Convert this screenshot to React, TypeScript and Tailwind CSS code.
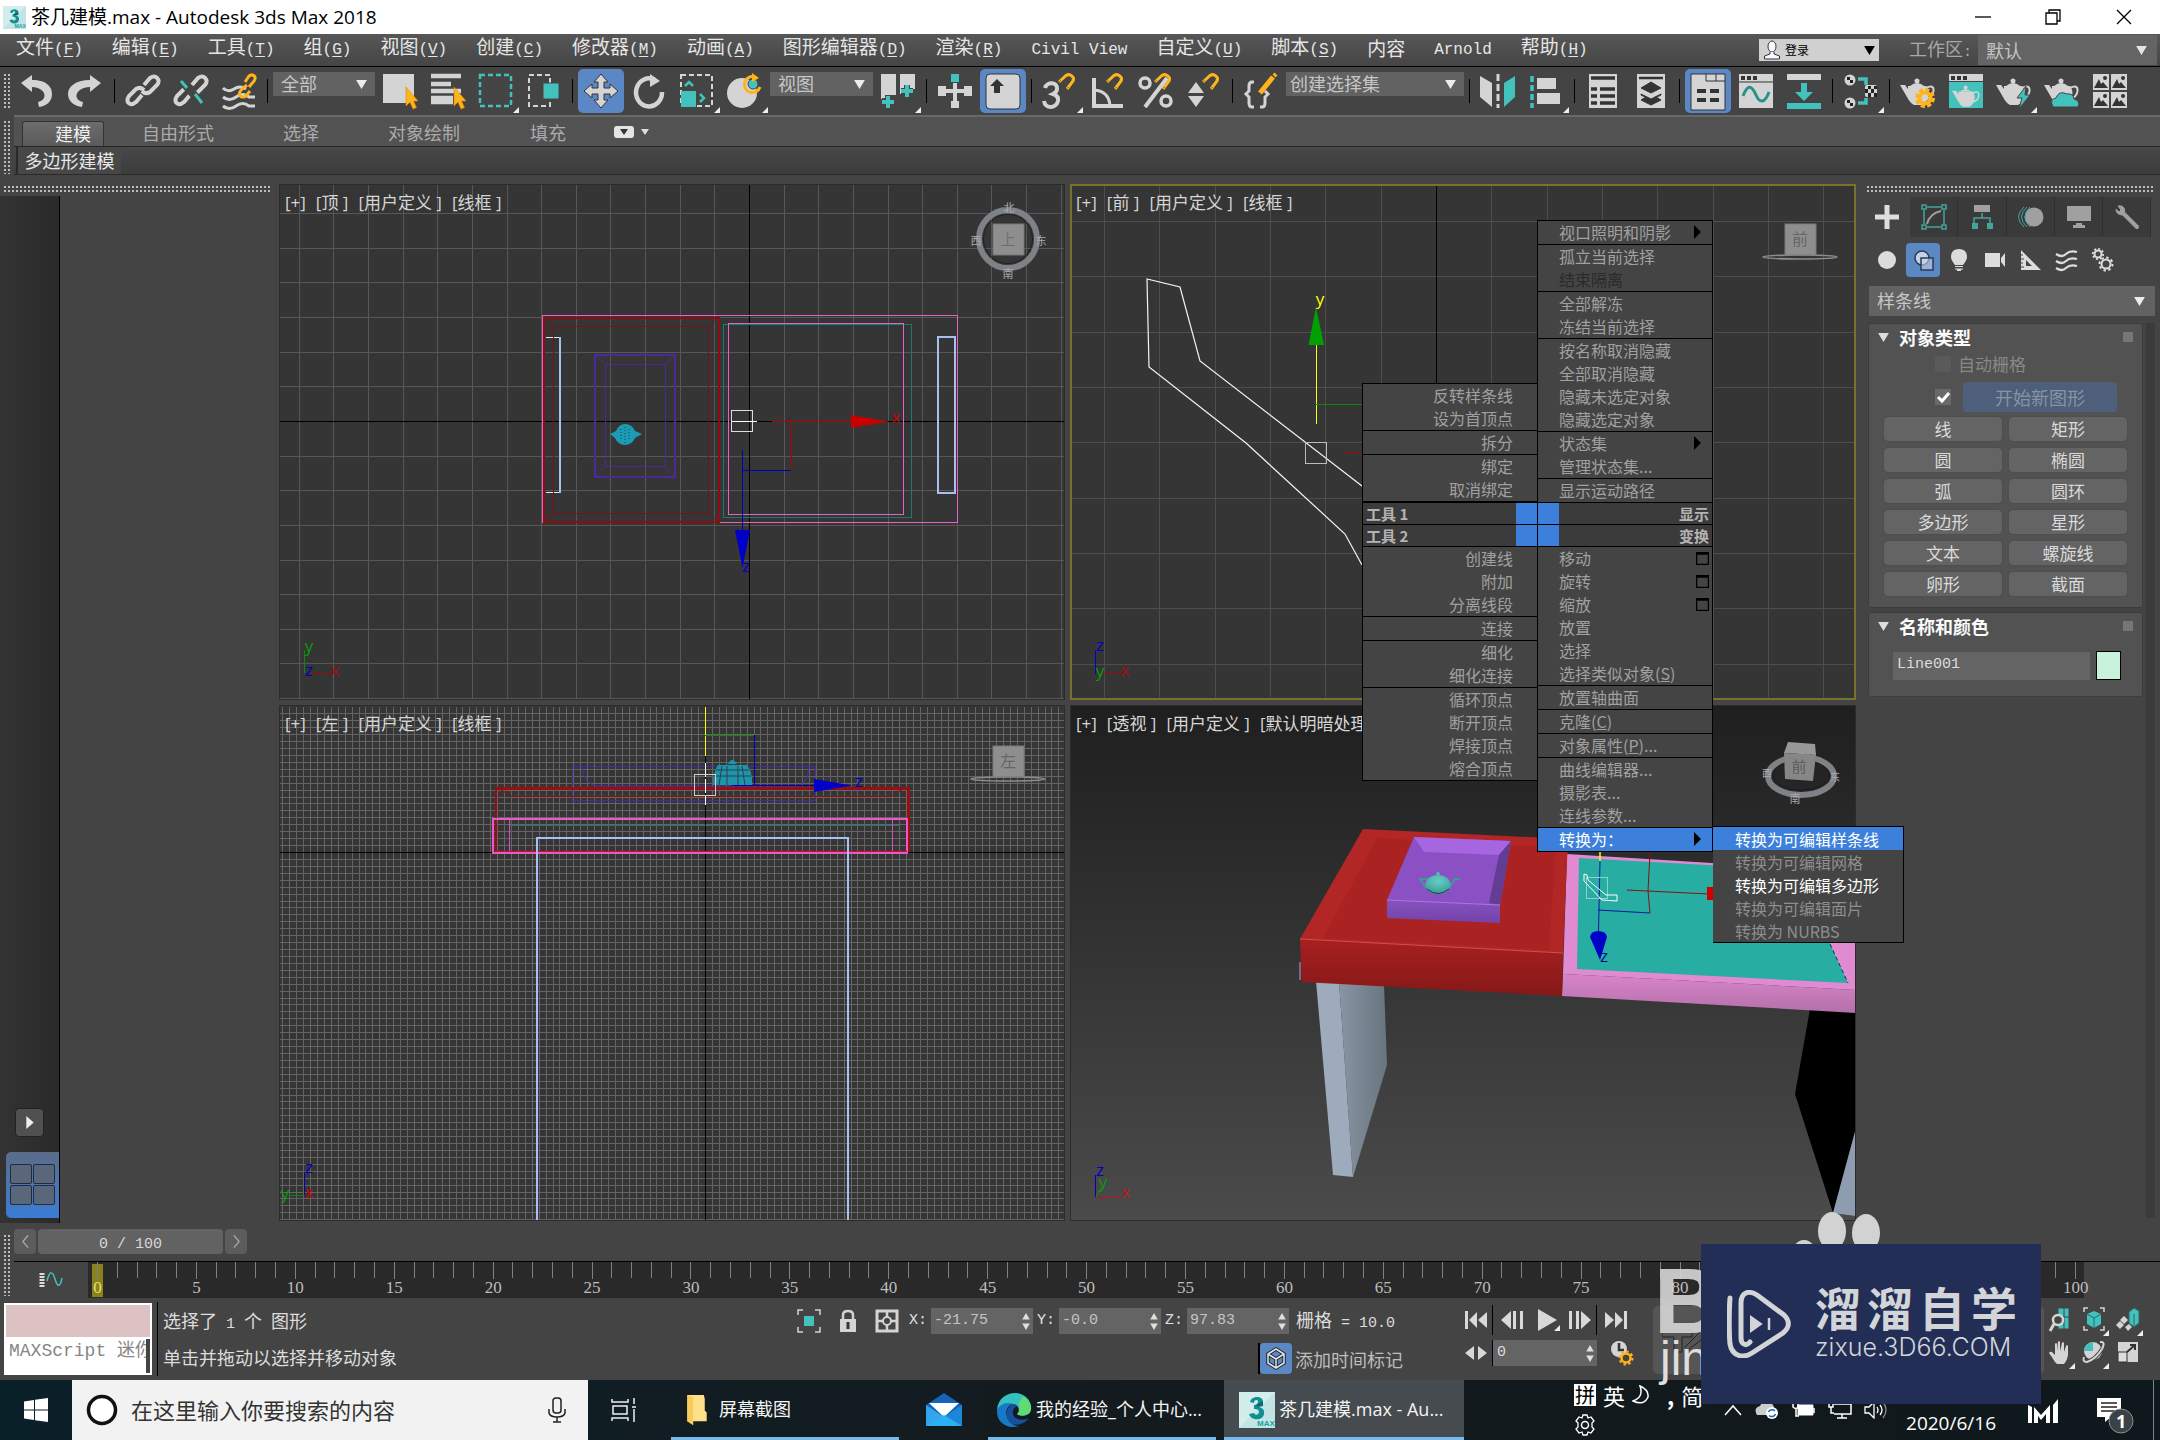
import React from "react";

const LIGHT = "#d4d4d4";
const TEAL = "#43c1bd";
const AMBER = "#ffb41c";

/* Sets half-width characters in the monospaced face beside full-width ones. */
function Mix({ children, big = false }: { children: string; big?: boolean }) {
  const parts = children.split(/([\x20-\x7e]+)/);
  return (
    <>
      {parts.map((p, i) =>
        i % 2 ? (
          <span key={i} className={`whitespace-pre font-['Liberation_Mono',monospace] ${big ? "text-[16px]" : "text-[15px]"}`}>
            {p}
          </span>
        ) : (
          <React.Fragment key={i}>{p}</React.Fragment>
        )
      )}
    </>
  );
}

function Caret({ className = "" }: { className?: string }) {
  return (
    <svg viewBox="0 0 12 10" className={`pointer-events-none h-[9px] w-[11px] ${className}`} aria-hidden="true">
      <path d="M0 0H12L6 10Z" fill="currentColor" />
    </svg>
  );
}

function Drop({ label, value, box, arrow = "right-2", text = "pl-2" }: { label: string; value: string; box: string; arrow?: string; text?: string }) {
  return (
    <div className={`relative flex shrink-0 items-center bg-[#626262] text-[#c6c6c6] ${box}`}>
      <select aria-label={label} className={`h-full w-full appearance-none bg-transparent pr-6 pb-[2px] text-[18px] leading-5 outline-none ${text}`}>
        <option>{value}</option>
      </select>
      <Caret className={`absolute text-[#ececec] ${arrow}`} />
    </div>
  );
}

/* ---------- title bar ---------- */

function MaxLogo({ className }: { className: string }) {
  return (
    <svg viewBox="0 0 36 36" className={className} aria-hidden="true">
      <rect width="36" height="36" fill="#d3ecec" />
      <path d="M0 36L36 0V36Z" fill="#c2e4e4" />
      <path d="M11 10C12 4 23 3 24 9C24 13 21 14 19 15C22 15 26 17 25 22C24 29 12 29 10 22L15 21C16 24 20 23 20 20C20 17 17 17 15 17V13C17 13 19 12 19 9.500C18 7 15 8 15 11Z" fill="#0f8f90" />
      <path d="M17 13L24 9V14L19 15Z" fill="#0a6a6e" />
      <text x="18" y="34" fontSize="8" fontWeight="700" fill="#14a5a5" fontFamily="Liberation Sans">MAX</text>
    </svg>
  );
}

function TitleBar() {
  return (
    <header className="flex h-[34px] shrink-0 items-center bg-white text-black">
      <MaxLogo className="ml-[3px] h-[23px] w-[23px]" />
      <h1 className="ml-[5px] font-['Open_Sans','Noto_Sans_CJK_SC',sans-serif] text-[19px] leading-[32px]">茶几建模.max - Autodesk 3ds Max 2018</h1>
      <div className="ml-auto flex h-full">
        <button aria-label="最小化" className="flex w-[70px] items-center justify-center">
          <svg viewBox="0 0 16 16" className="h-4 w-4"><path d="M0 8H16" stroke="#000" strokeWidth="1.300" /></svg>
        </button>
        <button aria-label="还原" className="flex w-[70px] items-center justify-center">
          <svg viewBox="0 0 16 16" className="h-4 w-4" fill="none" stroke="#000" strokeWidth="1.300"><path d="M1 4H12V15H1ZM4 4V1H15V12H12" /></svg>
        </button>
        <button aria-label="关闭" className="flex w-[72px] items-center justify-center">
          <svg viewBox="0 0 16 16" className="h-4 w-4"><path d="M1 1L15 15M15 1L1 15" stroke="#000" strokeWidth="1.300" /></svg>
        </button>
      </div>
    </header>
  );
}

/* ---------- menu bar ---------- */

const MENUS: [string, string?][] = [
  ["文件", "F"], ["编辑", "E"], ["工具", "T"], ["组", "G"], ["视图", "V"], ["创建", "C"], ["修改器", "M"], ["动画", "A"],
  ["图形编辑器", "D"], ["渲染", "R"], ["Civil View"], ["自定义", "U"], ["脚本", "S"], ["内容"], ["Arnold"], ["帮助", "H"],
];

function MenuBar() {
  return (
    <div className="flex h-[33px] shrink-0 items-center border-b border-black bg-linear-to-b from-[#575757] to-[#454545] pl-[16px]">
      <nav className="flex gap-[29px] pb-1">
        {MENUS.map(([t, k]) => (
          <button key={t} className="text-[19px] leading-[26px] whitespace-nowrap text-[#e6e6e6]">
            <Mix big>{t}</Mix>
            {k && (
              <span className="font-['Liberation_Mono',monospace] text-[16px]">
                (<u className="underline-offset-2">{k}</u>)
              </span>
            )}
          </button>
        ))}
      </nav>
      <div className="relative ml-auto flex h-[22px] w-[120px] items-center bg-[#d0d0d0] text-black">
        <svg viewBox="0 0 18 20" className="ml-1 h-[20px] w-[18px]" aria-hidden="true">
          <ellipse cx="9" cy="6.500" rx="4" ry="5.500" fill="#f4f8ff" stroke="#333" />
          <path d="M7 12V14L1.500 16V19H16.500V16L11 14V12" fill="#f4f8ff" stroke="#333" />
        </svg>
        <button className="ml-[4px] text-[12px] leading-[20px]">登录</button>
        <Caret className="absolute right-1 h-[7px] w-[10px] text-black" />
      </div>
      <label htmlFor="workspace" className="ml-[30px] text-[18px] text-[#a9a9a9]">
        <Mix>工作区:</Mix>
      </label>
      <div className="relative mr-[3px] ml-[6px] flex h-[30px] w-[179px] items-center bg-[#646464]">
        <select id="workspace" className="h-full w-full appearance-none bg-transparent pl-2 text-[18px] leading-5 text-[#c4c4c4]">
          <option>默认</option>
        </select>
        <Caret className="absolute right-[10px] text-[#e4e4e4]" />
      </div>
    </div>
  );
}

/* ---------- main toolbar ---------- */

const arrowCursor = <path d="M29 18V37L33 33L36 40L39.500 38.500L36.500 32H41Z" fill={AMBER} stroke="#d98b00" strokeWidth=".6" />;
const magnet = (
  <g fill="none" strokeWidth="3">
    <path d="M22 13L29 6.500C33 4 38 8 36 12L30 20" stroke={AMBER} />
    <path d="M22 13L24 11M31.500 18L30 20.500" stroke="#7a5a10" strokeWidth="1" strokeDasharray="1 1" />
  </g>
);
const link = "M24 16L30 9C36 5 41 11 37 16L30 23C27 25 24 24 22 22M22 26L16 33C10 38 5 33 9 27L16 20C19 18 22 19 24 21";
const teapot = (
  <g>
    <circle cx="22" cy="12" r="2.500" fill={LIGHT} />
    <path d="M15 17Q22 11 29 17Z" fill={LIGHT} />
    <path d="M13 17H31Q36 24 31 32Q29 36 26 36H19Q15 34 12 28L5 16H10L13 20Z" fill={LIGHT} />
    <path d="M31 19Q39 15 38.500 22Q38 28 31 30" fill="none" stroke={LIGHT} strokeWidth="2" />
  </g>
);
const picture = (x: number, y: number) => (
  <g key={`${x}-${y}`}>
    <rect x={x} y={y} width="16" height="16" fill={LIGHT} />
    <path d={`M${x + 1} ${y + 14}L${x + 6} ${y + 5}L${x + 8} ${y + 10}L${x + 10} ${y + 8}L${x + 15} ${y + 14}Z`} fill="#333" />
    <circle cx={x + 12} cy={y + 4} r="2" fill="#333" />
  </g>
);

type Tool = { id: string; active?: boolean; fly?: boolean; icon?: React.ReactNode };

const TOOLS: (Tool | "|" | "sel1" | "sel2" | "sel3")[] = [
  { id: "撤消", icon: <path d="M6 14L17 6V11C32 11 37 18 37 25C37 33 31 37 24 38L23 33C33 31 32 19 17 18V23Z" fill={LIGHT} /> },
  { id: "重做", icon: <path d="M38 14L27 6V11C12 11 5 18 5 25C5 33 12 37 19 38L20 33C10 31 11 19 27 18V23Z" fill={LIGHT} /> },
  "|",
  { id: "链接", icon: <path d={link} fill="none" stroke={LIGHT} strokeWidth="4" /> },
  { id: "取消链接", icon: (<g fill="none"><path d={link} stroke={LIGHT} strokeWidth="4" /><path d="M12 10L35 36" stroke="#444" strokeWidth="8" /><path d="M13 12L19 19M27 25L34 34" stroke={TEAL} strokeWidth="3" /></g>) },
  { id: "绑定到空间扭曲", icon: (<g fill="none"><path d="M7 19Q12 24 18 20T30 20M7 28Q13 33 20 28T33 28H39M7 37Q13 42 20 37T33 37H39" stroke={LIGHT} strokeWidth="3" /><path d="M29 13L33 7C37 4 41 8 38 12L33 18M31 16L26 20C20 26 26 30 30 27L34 22" stroke={AMBER} strokeWidth="3" /></g>) },
  "|",
  "sel1",
  { id: "选择对象", icon: (<g><rect x="6" y="5" width="31" height="29" fill={LIGHT} />{arrowCursor}</g>) },
  { id: "按名称选择", icon: (<g><path d="M6 7H36M6 15H26M6 22H36M6 29H28M6 33H28" stroke={LIGHT} strokeWidth="4.500" />{arrowCursor}</g>) },
  { id: "矩形选择区域", fly: true, icon: <rect x="7" y="6" width="31" height="31" fill="none" stroke={TEAL} strokeWidth="2.500" strokeDasharray="5 3" /> },
  { id: "窗口/交叉", icon: (<g><rect x="8" y="6" width="21" height="31" fill="none" stroke={LIGHT} strokeWidth="2" strokeDasharray="5 3" /><rect x="22" y="14" width="16" height="16" fill={TEAL} stroke="#444" /></g>) },
  "|",
  { id: "选择并移动", active: true, icon: <path d="M23 5L30 13H26V19H32V15L40 22L32 29V25H26V31H30L23 39L16 31H20V25H14V29L6 22L14 15V19H20V13H16Z" fill={LIGHT} stroke="#333" /> },
  { id: "选择并旋转", icon: (<g><path d="M29 11A13 14 0 1 0 36 23" fill="none" stroke={LIGHT} strokeWidth="4.500" /><path d="M24 5L34 12L24 18Z" fill={LIGHT} /></g>) },
  { id: "选择并缩放", fly: true, icon: (<g><rect x="7" y="6" width="31" height="31" fill="none" stroke={LIGHT} strokeWidth="2" strokeDasharray="5 3" /><rect x="7" y="22" width="15" height="16" fill={TEAL} /><path d="M11 17L15 13L19 17M26 25L30 29L26 33" fill="none" stroke={TEAL} strokeWidth="2.500" /></g>) },
  { id: "选择并放置", fly: true, icon: (<g><circle cx="20" cy="24" r="15" fill={LIGHT} /><circle cx="31" cy="15" r="5" fill={TEAL} stroke="#444" /><path d="M33 8A8 8 0 1 0 38 18" fill="none" stroke={AMBER} strokeWidth="3" /><path d="M30 4L37 9L30 13Z" fill={AMBER} /></g>) },
  "sel2",
  { id: "使用轴点中心", fly: true, icon: (<g><path d="M6 5H21V26H14V30H6Z" fill={LIGHT} /><path d="M25 5H40V20H35V25H25Z" fill={LIGHT} /><path d="M13 26V39M7 32H19M32 16V29M26 22H38" stroke="#444" strokeWidth="6" /><path d="M13 27V39M7 33H19M32 16V28M26 22H38" stroke={TEAL} strokeWidth="4" /></g>) },
  "|",
  { id: "选择并操纵", icon: (<g fill={LIGHT}><path d="M21 14H25V20H32V17H40V27H32V24H25V32H27V39H19V32H21V24H14V27H6V17H14V20H21Z" /><rect x="19" y="5" width="8" height="8" fill={TEAL} /></g>) },
  { id: "键盘快捷键覆盖切换", active: true, icon: (<g><rect x="6" y="5" width="34" height="35" rx="4" fill={LIGHT} stroke="#333" /><path d="M17 10L24 17H20V24H14V17H10Z" fill="#333" /></g>) },
  "|",
  { id: "捕捉开关", fly: true, icon: (<g>{magnet}<path d="M8 19C10 12 21 13 20 20Q20 23 16 25Q22 27 21 32C19 40 8 40 7 32" fill="none" stroke={LIGHT} strokeWidth="4" /></g>) },
  { id: "角度捕捉切换", icon: (<g fill="none">{magnet}<path d="M9 9V37H38" stroke={LIGHT} strokeWidth="4" /><path d="M9 21Q24 22 25 37" stroke={LIGHT} strokeWidth="3" /></g>) },
  { id: "百分比捕捉切换", icon: (<g fill="none">{magnet}<circle cx="12" cy="14" r="5" stroke={LIGHT} strokeWidth="3.500" /><circle cx="33" cy="32" r="5" stroke={LIGHT} strokeWidth="3.500" /><path d="M34 9L12 38" stroke={LIGHT} strokeWidth="4" /></g>) },
  { id: "微调器捕捉切换", icon: (<g>{magnet}<path d="M15 13L23 24H7ZM15 38L7 27H23Z" fill={LIGHT} /></g>) },
  "|",
  { id: "编辑命名选择集", icon: (<g fill="none"><path d="M16 13H14Q11 13 11 17V22L8 25L11 28V34Q11 38 14 38H16M22 38H24Q27 38 27 34V28L30 25L27 22" stroke={LIGHT} strokeWidth="3" /><path d="M22 24L35 8" stroke={AMBER} strokeWidth="5" /><path d="M36 7L38 5" stroke={AMBER} strokeWidth="4" /></g>) },
  "sel3",
  "|",
  { id: "镜像", icon: (<g><path d="M5 7L17 14V38L5 28Z" fill={LIGHT} /><path d="M40 7L29 14V38L40 28Z" fill={TEAL} /><path d="M23 5V39" stroke={LIGHT} strokeWidth="3" strokeDasharray="7 3" /></g>) },
  { id: "对齐", fly: true, icon: (<g><path d="M9 7V39" stroke={TEAL} strokeWidth="3.500" strokeDasharray="6 3" /><path d="M14 9H33V20H14ZM14 24H37V35H14Z" fill={LIGHT} /></g>) },
  "|",
  { id: "切换场景资源管理器", icon: (<g><rect x="9" y="5" width="28" height="34" fill={LIGHT} /><path d="M11 9H35M11 20H17M20 20H35M11 27H17M20 27H35M11 34H17M20 34H35" stroke="#333" strokeWidth="3.500" /></g>) },
  { id: "切换层资源管理器", icon: (<g><rect x="9" y="5" width="28" height="34" fill={LIGHT} /><path d="M11 9H35" stroke="#333" strokeWidth="2.500" /><path d="M23 13L33 19L23 24L13 19ZM13 25L23 30L33 25V26L23 31L13 26ZM13 31L23 36L33 31L28 28L23 31L18 28Z" fill="#333" stroke="#333" /></g>) },
  "|",
  { id: "显示功能区", active: true, icon: (<g><path d="M6 5H40V41H6Z" fill={LIGHT} stroke="#333" /><path d="M21 5V12H40M31 5V12" fill="none" stroke="#333" /><path d="M12 22H21M25 22H34M12 31H21M25 31H34" stroke="#333" strokeWidth="4" /></g>) },
  { id: "曲线编辑器", icon: (<g><rect x="6" y="5" width="34" height="34" fill={LIGHT} /><path d="M8 9H12M14 9H18M20 9H24" stroke="#333" strokeWidth="4" /><path d="M6 13H40" stroke="#333" /><path d="M10 27C15 14 19 17 23 26S32 34 36 23" fill="none" stroke="#2b8f8c" strokeWidth="3" /></g>) },
  { id: "图解视图", icon: (<g><rect x="6" y="5" width="34" height="6" fill={LIGHT} /><rect x="6" y="34" width="34" height="6" fill={TEAL} /><path d="M20 14H26V23H32L23 32L14 23H20Z" fill={TEAL} /></g>) },
  "|",
  { id: "材质编辑器", fly: true, icon: (<g><path d="M20 10H28V16M20 34H28V29" fill="none" stroke={TEAL} strokeWidth="3.500" /><circle cx="12" cy="11" r="5.500" fill={LIGHT} /><circle cx="12" cy="34" r="5.500" fill={LIGHT} /><rect x="27" y="16" width="12" height="12" rx="2" fill={LIGHT} /><path d="M9 8H12V11H15V14H12V11H9ZM9 31H12V34H15V37H12V34H9ZM30 17H33V20H30ZM36 17H39V20H36ZM27 20H30V24H27ZM33 20H36V24H33ZM30 24H33V28H30ZM36 24H39V28H36Z" fill="#222" /></g>) },
  "|",
  { id: "渲染设置", icon: (<g>{teapot}<circle cx="30" cy="29" r="8" fill="none" stroke={AMBER} strokeWidth="4" strokeDasharray="4 2.280" /><circle cx="30" cy="29" r="5.500" fill="none" stroke={AMBER} strokeWidth="4" /><circle cx="30" cy="29" r="3.200" fill={LIGHT} /></g>) },
  { id: "渲染帧窗口", icon: (<g><rect x="6" y="5" width="34" height="7" fill={LIGHT} /><path d="M8 9H12M14 9H18M20 9H24" stroke="#333" strokeWidth="4" /><rect x="6" y="13" width="34" height="26" fill={TEAL} /><g transform="translate(5 9) scale(.8)">{teapot}</g></g>) },
  { id: "渲染产品", fly: true, icon: (<g>{teapot}<path d="M35 17L26 29H31L28 40L39 26H34Z" fill={TEAL} stroke="#444" /></g>) },
  { id: "在云中渲染", icon: (<g>{teapot}<path d="M14 38Q10 30 17 29Q20 21 28 25Q34 24 35 30Q42 32 39 38Z" fill={TEAL} stroke="#444" /></g>) },
  { id: "打开库", icon: <g>{[picture(6, 5), picture(24, 5), picture(6, 23), picture(24, 23)]}</g> },
];

const GRIP = "bg-[radial-gradient(#bdbdbd_1px,transparent_1px)] bg-[length:4px_4px]";

function Toolbar() {
  return (
    <div className="flex h-[48px] shrink-0 items-start gap-[2px] overflow-hidden bg-[#444] pt-[2px]">
      <div className={`mt-[4px] mr-[2px] ml-[3px] h-[37px] w-[8px] shrink-0 ${GRIP}`} />
      {TOOLS.map((t, i) => {
        if (t === "|") return <div key={i} className="mt-[10px] mr-[3px] ml-[3px] h-[24px] w-px shrink-0 bg-black" />;
        if (t === "sel1") return <Drop key={i} label="选择过滤器" value="全部" box="mt-[3px] h-[24px] w-[102px]" />;
        if (t === "sel2") return <Drop key={i} label="参考坐标系" value="视图" box="mt-[3px] h-[24px] w-[103px]" />;
        if (t === "sel3") return <Drop key={i} label="命名选择集" value="创建选择集" box="mt-[3px] h-[24px] w-[178px]" text="pl-1" />;
        return (
          <button key={t.id} aria-label={t.id} className={`h-[44px] w-[46px] shrink-0 rounded-[5px] ${t.active ? "bg-[#5b87c4]" : ""}`}>
            <svg viewBox="0 0 46 44" className="h-[44px] w-[46px]" aria-hidden="true">
              {t.icon}
              {t.fly && <path d="M46 38V44H40Z" fill="#eee" />}
            </svg>
          </button>
        );
      })}
    </div>
  );
}

/* ---------- ribbon ---------- */

function Ribbon() {
  return (
    <div className="flex h-[60px] shrink-0 bg-[#444]">
      <div className={`mt-[5px] ml-[3px] h-[54px] w-[8px] shrink-0 ${GRIP}`} />
      <div className="ml-[3px] flex min-w-0 flex-1 flex-col">
        <div className="flex h-[32px] items-end border-t-2 border-b border-t-[#686868] border-b-[#262626] bg-[#525252] text-[18px] leading-[28px] text-[#ababab]">
          <button className="ml-[8px] h-[25px] w-[82px] rounded-t-[3px] border border-b-0 border-[#333] bg-linear-to-b from-[#6c6c6c] to-[#5a5a5a] pb-[3px] pl-[32px] text-left leading-[20px] text-[#eee]">建模</button>
          <button className="ml-[38px]">自由形式</button>
          <button className="ml-[69px]">选择</button>
          <button className="ml-[69px]">对象绘制</button>
          <button className="ml-[70px]">填充</button>
          <button aria-label="功能区显示" className="mb-[8px] ml-[48px] flex items-center gap-[7px]">
            <span className="flex h-[12px] w-[20px] items-center justify-center rounded-[3px] bg-[#e4e4e4]">
              <svg viewBox="0 0 8 6" className="h-[6px] w-[8px]"><path d="M0 0H8L4 6Z" fill="#333" /></svg>
            </span>
            <svg viewBox="0 0 8 6" className="h-[6px] w-[8px]"><path d="M0 0H8L4 6Z" fill="#ddd" /></svg>
          </button>
        </div>
        <div className="flex h-[28px] items-center border-b border-[#2a2a2a] bg-linear-to-b from-[#484848] to-[#3c3c3c] pl-[2px]">
          <button className="h-full w-[105px] border-l-2 border-[#2a2a2a] bg-[#474747] pb-[2px] text-[18px] leading-[24px] text-[#e8e8e8]">多边形建模</button>
        </div>
      </div>
    </div>
  );
}

/* ---------- viewports ---------- */

function lines(from: number, to: number, origin: number, step: number) {
  const out: number[] = [];
  const first = origin - Math.floor((origin - from) / step) * step;
  for (let v = first; v < to; v += step) out.push(Math.round(v) + 0.5);
  return out;
}

function Grid({ x, y, ox, oy, step, color }: { x: number; y: number; ox: number; oy: number; step: number; color: string }) {
  return (
    <g stroke={color} strokeWidth="1" shapeRendering="crispEdges">
      {lines(x, x + 786, ox, step).map((v) => <path key={`v${v}`} d={`M${v} ${y}V${y + 516}`} />)}
      {lines(y, y + 516, oy, step).map((v) => <path key={`h${v}`} d={`M${x} ${v}H${x + 786}`} />)}
    </g>
  );
}

function Letter({ x, y, c, children, size = 17 }: { x: number; y: number; c: string; children: string; size?: number }) {
  return (
    <text x={x} y={y} fill={c} fontSize={size} textAnchor="middle" dominantBaseline="central" fontFamily="'Open Sans','Noto Sans CJK SC',sans-serif">
      {children}
    </text>
  );
}

function FlatCube({ x, y, face }: { x: number; y: number; face: string }) {
  return (
    <g>
      <ellipse cx={x} cy={y + 18} rx="37" ry="2" fill="none" stroke="#8b8d90" strokeWidth="1.500" />
      <rect x={x - 15} y={y - 15} width="31" height="31" fill="#8e8e8e" stroke="#7b7b7b" />
      <Letter x={x} y={y} c="#666" size={16}>{face}</Letter>
    </g>
  );
}

function View({ label, box, active = false, className, children }: { label: string[]; box: string; active?: boolean; className: string; children: React.ReactNode }) {
  return (
    <section aria-label={label.join(" ")} className={`relative min-h-0 min-w-0 overflow-hidden ${className}`}>
      <svg viewBox={box} preserveAspectRatio="xMidYMid slice" className="block h-full w-full" aria-hidden="true">{children}</svg>
      <div className={`absolute inset-0 flex items-start gap-[10px] text-[17px] leading-[24px] whitespace-nowrap text-[#d6d6d6] ${active ? "border-2 border-[#7a712c] pt-[5px] pl-[4px]" : "border border-[#2c2c2c] pt-[6px] pl-[5px]"}`}>
        {label.map((l) => <button key={l} className="font-['Open_Sans','Noto_Sans_CJK_SC',sans-serif]">{l}</button>)}
      </div>
    </section>
  );
}

function TopView() {
  return (
    <View label={["[+]", "[顶 ]", "[用户定义 ]", "[线框 ]"]} box="279 184 786 516" className="bg-[#353535]">
      <Grid x={279} y={184} ox={749} oy={421} step={34.64} color="#575757" />
      <path d="M749.500 184V700M279 421.500H1065" stroke="#000" shapeRendering="crispEdges" />
      <g fill="none" shapeRendering="crispEdges">
        <path d="M542.500 315.500H957.500V522.500H542.500Z" stroke="#e662c6" strokeWidth="1.500" />
        <path d="M723.500 324.500H911.500V517.500H723.500Z" stroke="#1a7a6e" />
        <path d="M728.500 323.500H903.500V514.500H728.500Z" stroke="#e662c6" />
        <path d="M545.500 337.500H560M545.500 492.500H560" stroke="#dfe8f8" />
        <path d="M560 337V493" stroke="#a9c0ee" strokeWidth="2" />
        <path d="M938 337H955V493H938Z" stroke="#a9c0ee" strokeWidth="2" />
        <path d="M544 317.500H719V522H544Z" stroke="#900c14" strokeWidth="2" />
        <path d="M553.500 326.500H708.500V513.500H553.500Z" stroke="#7c1014" />
        <path d="M595 355H675V477H595Z" stroke="#4a2a98" strokeWidth="2" />
        <path d="M605.500 364.500H665.500V466.500H605.500Z" stroke="#4a2a98" />
      </g>
      <g stroke="#7c1014"><path d="M544 317L553 326M719 317L709 326M544 522L553 513M719 522L709 513" /></g>
      <g stroke="#4a2a98"><path d="M595 355L605 364M675 355L665 364M595 477L605 466M675 477L665 466" /></g>
      <path d="M610 434L616 431Q619 424 625 424Q632 424 635 431L642 434L635 438Q632 445 625 445Q618 445 615 438Z" fill="#1c9cb4" />
      <g stroke="#173a5c" strokeDasharray="1 2" fill="none"><path d="M621 429V441M625 427V443M629 429V441" /></g>
      <g shapeRendering="crispEdges" fill="none">
        <rect x="731.500" y="410.500" width="21" height="21" stroke="#ddd" />
        <path d="M732 421.500H757" stroke="#fff" />
        <path d="M772 421.500H852M791.500 421V470" stroke="#b30000" />
        <path d="M742.500 450V530M742 470.500H791" stroke="#0000b8" />
      </g>
      <path d="M851 415V428L889 421.500Z" fill="#c80000" />
      <path d="M735 530H750L742.500 568Z" fill="#0000c8" />
      <Letter x={896} y={416} c="#d00000">x</Letter>
      <Letter x={746} y={565} c="#0000c8">z</Letter>
      <path d="M304.500 673V650" stroke="#0a8a0a" /><path d="M311 673.500H330" stroke="#a00a0a" />
      <Letter x={309} y={645} c="#0a9a0a">y</Letter>
      <Letter x={309} y={669} c="#0000b8">z</Letter>
      <Letter x={335} y={669} c="#b00a0a">x</Letter>
      <circle cx="1008" cy="239" r="29" fill="none" stroke="#7e8286" strokeWidth="6" />
      <circle cx="1008" cy="239" r="24.500" fill="none" stroke="#222" strokeWidth="1" />
      <rect x="993" y="224" width="31" height="31" fill="#8e8e8e" stroke="#777" />
      <Letter x={1008} y={239} c="#6e6e6e" size={15}>上</Letter>
      <Letter x={1009} y={207} c="#ababab" size={11}>北</Letter>
      <Letter x={1008} y={273} c="#ababab" size={11}>南</Letter>
      <Letter x={976} y={240} c="#ababab" size={11}>西</Letter>
      <Letter x={1041} y={240} c="#ababab" size={11}>东</Letter>
    </View>
  );
}

function FrontView() {
  return (
    <View active label={["[+]", "[前 ]", "[用户定义 ]", "[线框 ]"]} box="1070 184 786 516" className="bg-[#353535]">
      <Grid x={1070} y={184} ox={1436} oy={221} step={55.35} color="#4d4d4d" />
      <path d="M1436.500 184V700" stroke="#000" shapeRendering="crispEdges" />
      <path d="M1362 486L1200 361L1180 287L1147 279L1149 367L1246 443L1345 534L1362 565" fill="none" stroke="#f4f4f4" strokeWidth="1.200" />
      <g shapeRendering="crispEdges" fill="none">
        <path d="M1316.500 345V424" stroke="#ffff00" />
        <path d="M1316 404.500H1362" stroke="#0a8a0a" />
        <path d="M1345 452.500H1362" stroke="#b30000" />
        <rect x="1305.500" y="442.500" width="21" height="21" stroke="#bbb" />
      </g>
      <path d="M1316 307L1324 345H1308.500Z" fill="#00a000" />
      <Letter x={1320} y={298} c="#ffff00">y</Letter>
      <path d="M1095.500 674V650" stroke="#0000c8" /><path d="M1103 673.500H1121" stroke="#a00a0a" />
      <Letter x={1100} y={644} c="#0000c8">z</Letter>
      <Letter x={1100} y={670} c="#0a9a0a">y</Letter>
      <Letter x={1125} y={669} c="#b00a0a">x</Letter>
      <FlatCube x={1800} y={239} face="前" />
    </View>
  );
}

function LeftView() {
  return (
    <View label={["[+]", "[左 ]", "[用户定义 ]", "[线框 ]"]} box="279 705 786 516" className="bg-[#353535]">
      <Grid x={279} y={707} ox={705} oy={852} step={6.93} color="#646464" />
      <path d="M705.500 707V1221M279 852.500H1065" stroke="#000" shapeRendering="crispEdges" />
      <g fill="none" shapeRendering="crispEdges">
        <path d="M572.500 766.500H815.500V800.500H572.500Z" stroke="#4a2ab4" strokeDasharray="10 1" />
        <path d="M495.500 788H908V852" stroke="#9c0c10" strokeWidth="3" />
        <path d="M496 787V852" stroke="#9c0c10" strokeWidth="2" />
        <path d="M509 825.500H899" stroke="#1a7a6e" />
        <path d="M509.500 819V852M892.500 819V852" stroke="#d64fc0" />
        <path d="M493 852.500V819H907V852.500Z" stroke="#ee55c8" strokeWidth="2" />
        <path d="M495 851.500H907" stroke="#c41230" />
        <path d="M537 1221V838H848V1221" stroke="#a9c0f4" strokeWidth="2" />
      </g>
      <path d="M498 788L512 796.500H890L905 788" fill="none" stroke="#8c1014" />
      <path d="M582 767Q583 784 598 786H800Q808 780 809 767" fill="none" stroke="#4a2ab4" />
      <path d="M718 765H747Q753 773 752 785H713Q713 772 718 765ZM728 764Q732 756 737 764Z" fill="#1c94ac" />
      <path d="M714 776H751M716 770H749M722 766L719 785M742 766L745 785M727 766V785M738 766V785" stroke="#28424e" />
      <g shapeRendering="crispEdges" fill="none">
        <path d="M705.500 707V756" stroke="#ffff00" />
        <path d="M705 735.500H755" stroke="#0a8a0a" />
        <path d="M754.500 735V785M732 785.500H815" stroke="#0000b8" />
        <path d="M705.500 763V805" stroke="#fff" strokeDasharray="14 2" />
        <rect x="694.500" y="774.500" width="21" height="21" stroke="#ccc" />
      </g>
      <path d="M814 779V792L852 785.500Z" fill="#0000c8" />
      <Letter x={859} y={780} c="#0000c8">z</Letter>
      <path d="M304.500 1195V1172" stroke="#0000b8" /><path d="M289 1195.500H304" stroke="#0a8a0a" />
      <Letter x={309} y={1166} c="#0000c8">z</Letter>
      <Letter x={309} y={1191} c="#c80000">x</Letter>
      <Letter x={285} y={1192} c="#0a9a0a">y</Letter>
      <FlatCube x={1008} y={761} face="左" />
    </View>
  );
}

function PerspectiveView() {
  return (
    <View label={["[+]", "[透视 ]", "[用户定义 ]", "[默认明暗处理 ]"]} box="1070 705 786 516" className="bg-linear-to-b from-[#1f1f1f] to-[#4b4b4b]">
      <defs>
        <linearGradient id="redFront" x1="0" y1="0" x2="0" y2="1"><stop offset="0" stopColor="#a82020" /><stop offset="1" stopColor="#861818" /></linearGradient>
        <linearGradient id="pinkFront" x1="0" y1="0" x2="0" y2="1"><stop offset="0" stopColor="#d885cb" /><stop offset="1" stopColor="#b470a8" /></linearGradient>
        <linearGradient id="legSide" x1="0" y1="0" x2="1" y2="0"><stop offset="0" stopColor="#8995a3" /><stop offset="1" stopColor="#68747f" /></linearGradient>
        <linearGradient id="boxFront" x1="0" y1="0" x2="0" y2="1"><stop offset="0" stopColor="#8850c0" /><stop offset="1" stopColor="#7344a8" /></linearGradient>
        <radialGradient id="potBody" cx=".5" cy=".3" r=".7"><stop offset="0" stopColor="#66cfc6" /><stop offset="1" stopColor="#3a9d98" /></radialGradient>
      </defs>
      <path d="M1316 981L1339 982L1353 1177L1333 1175Z" fill="#9dabbd" />
      <path d="M1339 982L1384 985L1387 1065L1353 1177Z" fill="url(#legSide)" />
      <path d="M1810 1009L1856 1010V1128L1833 1213L1795 1094Z" fill="#000" />
      <path d="M1856 1128L1833 1213L1856 1216Z" fill="#8e9cb0" />
      <path d="M1567 854L1856 872V990L1563 974Z" fill="#e08ad2" />
      <path d="M1563 974L1856 990V1013L1562 996Z" fill="url(#pinkFront)" />
      <path d="M1579 858L1800 870L1830 944L1848 983L1577 969Z" fill="#27ada2" />
      <path d="M1830 944L1848 983" stroke="#0b3b36" strokeDasharray="4 3" />
      <path d="M1363 829L1568 839L1563 953L1300 939Z" fill="#b32626" />
      <path d="M1377 838L1556 847L1549 950L1323 938Z" fill="#ab2222" />
      <path d="M1300 939L1563 953L1562 996L1302 982Z" fill="url(#redFront)" />
      <path d="M1300 939L1563 953" stroke="#d05050" />
      <path d="M1300 962V980" stroke="#d88fd0" />
      <path d="M1414 837L1511 841L1500 905L1387 900Z" fill="#8a50c4" />
      <path d="M1414 837L1511 841L1499 855L1424 852Z" fill="#a566e0" />
      <path d="M1511 841L1500 905L1489 903L1499 855Z" fill="#633c94" />
      <path d="M1387 900L1500 905V923L1387 918Z" fill="url(#boxFront)" />
      <path d="M1387 900L1500 905" stroke="#a87ae0" />
      <path d="M1426 888L1420 879L1428 879M1449 888L1455 879H1460" fill="none" stroke="#3d9a94" strokeWidth="2" />
      <path d="M1425 885Q1427 875 1438 875Q1449 875 1451 885Q1449 894 1438 894Q1427 894 1425 885Z" fill="url(#potBody)" />
      <path d="M1427 889Q1438 898 1449 889" fill="none" stroke="#1c3f3e" />
      <circle cx="1438" cy="874" r="2" fill="#4fbcb4" />
      <path d="M1600 852V861" stroke="#ff0" strokeWidth="1.500" />
      <path d="M1600 861L1598.500 932M1598 910L1650 913" stroke="#0a1aa0" fill="none" />
      <path d="M1650 852L1648 891L1650 913M1627 890L1709 894" stroke="#8a1010" fill="none" />
      <rect x="1707" y="887" width="8" height="13" fill="#d00000" />
      <path d="M1590 937Q1591 931 1598 931Q1606 931 1607 937L1600 960Z" fill="#0000c8" />
      <Letter x={1604} y={955} c="#001090">z</Letter>
      <rect x="1586.500" y="877.500" width="21" height="21" fill="none" stroke="#8fd0c8" />
      <path d="M1584 874L1587 875L1588 880L1606 895L1617 895V901L1602 900L1584 881Z" fill="none" stroke="#fff" />
      <path d="M1095.500 1197V1175" stroke="#0000b8" /><path d="M1097 1196.500H1120" stroke="#c01010" /><path d="M1096 1196L1101 1188" stroke="#0a9a0a" />
      <Letter x={1100} y={1169} c="#0000c8">z</Letter>
      <Letter x={1103} y={1181} c="#0a9a0a">y</Letter>
      <Letter x={1126} y={1191} c="#c01818">x</Letter>
      <ellipse cx="1801" cy="776" rx="33" ry="19" fill="none" stroke="#7e8286" strokeWidth="6" />
      <ellipse cx="1801" cy="775" rx="28" ry="15" fill="none" stroke="#1c1c1c" />
      <path d="M1788 742L1815 744L1816 755L1784 753Z" fill="#989898" />
      <path d="M1784 753L1816 755L1813 781L1785 779Z" fill="#868686" />
      <Letter x={1799} y={766} c="#5c5c5c" size={15}>前</Letter>
      <Letter x={1767} y={773} c="#aaa" size={10}>西</Letter>
      <Letter x={1835} y={777} c="#aaa" size={10}>东</Letter>
      <Letter x={1795} y={798} c="#aaa" size={11}>南</Letter>
    </View>
  );
}

/* ---------- quad menu ---------- */

type Item = { t: string; key?: string; tail?: string; off?: boolean; sub?: boolean; box?: boolean; on?: boolean };

const UPPER_LEFT: Item[][] = [[{ t: "反转样条线" }, { t: "设为首顶点" }], [{ t: "拆分" }], [{ t: "绑定" }, { t: "取消绑定" }]];
const LOWER_LEFT: Item[][] = [
  [{ t: "创建线" }, { t: "附加" }, { t: "分离线段" }], [{ t: "连接" }], [{ t: "细化" }, { t: "细化连接" }],
  [{ t: "循环顶点" }, { t: "断开顶点" }, { t: "焊接顶点" }, { t: "熔合顶点" }],
];
const UPPER_RIGHT: Item[][] = [
  [{ t: "视口照明和阴影", sub: true }], [{ t: "孤立当前选择" }, { t: "结束隔离", off: true }], [{ t: "全部解冻" }, { t: "冻结当前选择" }],
  [{ t: "按名称取消隐藏" }, { t: "全部取消隐藏" }, { t: "隐藏未选定对象" }, { t: "隐藏选定对象" }],
  [{ t: "状态集", sub: true }, { t: "管理状态集..." }], [{ t: "显示运动路径" }],
];
const LOWER_RIGHT: Item[][] = [
  [{ t: "移动", box: true }, { t: "旋转", box: true }, { t: "缩放", box: true }, { t: "放置" }, { t: "选择" }, { t: "选择类似对象", key: "S" }],
  [{ t: "放置轴曲面" }], [{ t: "克隆", key: "C" }], [{ t: "对象属性", key: "P", tail: "..." }],
  [{ t: "曲线编辑器..." }, { t: "摄影表..." }, { t: "连线参数..." }], [{ t: "转换为：", sub: true, on: true }],
];

function Groups({ groups, right = false }: { groups: Item[][]; right?: boolean }) {
  return (
    <>
      {groups.map((g, i) => (
        <div key={i} className="border-b border-black">
          {g.map((it) => (
            <button
              key={it.t}
              className={`flex h-[23px] w-full items-center pb-px text-[16px] leading-[22px] whitespace-nowrap ${right ? "justify-end pr-[24px]" : "pr-[3px] pl-[21px]"} ${it.on ? "bg-[#3c80dc] text-white" : it.off ? "text-[#2a2a2a]" : "text-[#a0a0a0]"}`}
            >
              <span>{it.t}{it.key && <>(<u>{it.key}</u>)</>}{it.tail}</span>
              {it.sub && <svg viewBox="0 0 7 14" className="mr-[8px] ml-auto h-[14px] w-[7px]" aria-hidden="true"><path d="M0 0L7 7L0 14Z" fill="#000" /></svg>}
              {it.box && <svg viewBox="0 0 13 13" className="ml-auto h-[13px] w-[13px]" aria-hidden="true"><path d="M.5 .5H12.500V12.500H.5ZM0 2H13" fill="none" stroke="#000" strokeWidth="1.500" /></svg>}
            </button>
          ))}
        </div>
      ))}
    </>
  );
}

function QuadMenu() {
  const head = "flex h-[22px] items-center justify-between border-b border-black bg-[#3b3b3b] text-[15px] leading-[20px] font-bold text-[#b4b4b4]";
  return (
    <div role="menu" className="absolute top-[36px] left-[1083px] z-20 flex items-start font-['Noto_Sans_CJK_SC',sans-serif]">
      <div className="mt-[163px] w-[175px] border-t border-l border-black bg-[#444]">
        <div className="border-b border-black"><Groups groups={UPPER_LEFT} right /></div>
        <div className={`${head} pl-[3px]`}>工具 1<span className="h-full w-[21px] bg-[#3c80dc]" /></div>
        <div className={`${head} pl-[3px]`}>工具 2<span className="h-full w-[21px] bg-[#3c80dc]" /></div>
        <Groups groups={LOWER_LEFT} right />
      </div>
      <div className="w-[176px] border-t border-r border-l border-black bg-[#444]">
        <Groups groups={UPPER_RIGHT} />
        <div className={`${head} pr-[3px]`}><span className="h-full w-[21px] bg-[#3c80dc]" />显示</div>
        <div className={`${head} pr-[3px]`}><span className="h-full w-[21px] bg-[#3c80dc]" />变换</div>
        <Groups groups={LOWER_RIGHT} />
      </div>
      <div className="mt-[606px] w-[191px] border border-l-0 border-black bg-[#444] text-[16px] leading-[22px] text-[#8e8e8e]">
        <button className="block h-[23px] w-full bg-[#3c80dc] pl-[22px] text-left text-white">转换为可编辑样条线</button>
        <button className="block h-[23px] w-full pl-[22px] text-left">转换为可编辑网格</button>
        <button className="block h-[23px] w-full pl-[22px] text-left text-white">转换为可编辑多边形</button>
        <button className="block h-[23px] w-full pl-[22px] text-left">转换为可编辑面片</button>
        <button className="block h-[23px] w-full pl-[22px] text-left">转换为 NURBS</button>
      </div>
    </div>
  );
}

/* ---------- command panel ---------- */

const TABS: { id: string; icon: React.ReactNode }[] = [
  { id: "创建", icon: <path d="M12 0V24M0 12H24" stroke="#dedede" strokeWidth="5" /> },
  { id: "修改", icon: (<g fill="none" stroke="#46a39c" strokeWidth="1.500"><path d="M5 2H19M2 5V19M22 5V19M5 22H19" /><rect x="0" y="0" width="4" height="4" /><rect x="20" y="0" width="4" height="4" /><rect x="0" y="20" width="4" height="4" /><rect x="20" y="20" width="4" height="4" /><path d="M5 19Q8 8 19 6" stroke="#a0a0a0" strokeWidth="2" /></g>) },
  { id: "层次", icon: (<g><rect x="4" y="0" width="16" height="7" fill="#a0a0a0" /><path d="M12 8V13M4 19V13H20V19" fill="none" stroke="#46a39c" strokeWidth="1.500" /><rect x="2" y="18" width="6" height="6" fill="#46a39c" /><rect x="17" y="18" width="6" height="6" fill="#46a39c" /></g>) },
  { id: "运动", icon: (<g fill="none" stroke="#46a39c"><circle cx="15" cy="12" r="9.500" fill="#a0a0a0" stroke="none" /><path d="M8 2Q-3 12 8 22M5 2Q-6 12 5 22M11 2Q1 12 11 22" /></g>) },
  { id: "显示", icon: <path d="M0 1H24V16H0ZM9 18H15V20H18V23H6V20H9Z" fill="#a0a0a0" /> },
  { id: "实用程序", icon: (<g fill="none" stroke="#a0a0a0"><path d="M9 9L22 22" strokeWidth="4" strokeLinecap="round" /><path d="M3 1L6 5L4 7L1 4Q1 10 8 10Q11 7 9 3Q7 0 3 1" fill="#a0a0a0" /></g>) },
];

const CATEGORIES: { id: string; active?: boolean; icon: React.ReactNode }[] = [
  { id: "几何体", icon: <circle cx="17" cy="17" r="9" fill="#dcdcdc" /> },
  { id: "图形", active: true, icon: (<g fill="#c5d2e6" stroke="#2c3c55" strokeWidth="1.500"><circle cx="16" cy="15" r="7" /><rect x="15" y="15" width="12" height="12" fillOpacity=".6" /></g>) },
  { id: "灯光", icon: <path d="M17 6Q25 6 25 14Q25 17 21 22H13Q9 17 9 14Q9 6 17 6ZM13 23H21V24H13ZM13 25.500H21V26.500H19V28H15V26.500H13Z" fill="#dcdcdc" /> },
  { id: "摄影机", icon: <path d="M7 10H22V24H7ZM23 15L27 10V24L23 19Z" fill="#dcdcdc" /> },
  { id: "辅助对象", icon: (<g><path d="M7 7L27 27H7ZM12 17V23H18Z" fill="#dcdcdc" fillRule="evenodd" /><path d="M7 12H9M7 16H10M7 20H9M7 24H10" stroke="#444" /></g>) },
  { id: "空间扭曲", icon: <path d="M6 11Q12 15 16 11T27 9M6 18Q12 22 16 18T27 16M6 25Q12 29 16 25T27 23" fill="none" stroke="#dcdcdc" strokeWidth="2.200" /> },
  { id: "系统", icon: (<g fill="none" stroke="#dcdcdc"><circle cx="12" cy="11" r="3.500" strokeWidth="2" /><circle cx="12" cy="11" r="5.200" strokeWidth="1.800" strokeDasharray="2 2" /><circle cx="20" cy="21" r="4.500" strokeWidth="2" /><circle cx="20" cy="21" r="6.500" strokeWidth="2" strokeDasharray="2.500 2.500" /></g>) },
];

const SHAPES = ["线", "矩形", "圆", "椭圆", "弧", "圆环", "多边形", "星形", "文本", "螺旋线", "卵形", "截面"];

function Rollout({ title, className, children }: { title: string; className: string; children: React.ReactNode }) {
  return (
    <section className={`rounded-[3px] border border-[#3c3c3c] bg-[#525252] ${className}`}>
      <h2 className="flex h-[26px] items-center">
        <button className="flex flex-1 items-center pl-[9px] text-[18px] leading-[24px] font-bold text-[#fafafa]">
          <Caret className="mr-[10px] h-[8px] w-[10px] text-[#ddd]" />
          {title}
        </button>
        <span className="mr-[9px] h-[10px] w-[10px] bg-[radial-gradient(#999_1px,transparent_1px)] bg-[length:2px_2px] opacity-50" />
      </h2>
      {children}
    </section>
  );
}

function CommandPanel() {
  return (
    <aside className="flex w-[304px] shrink-0 flex-col bg-[#444] pt-[10px] pr-[5px] pl-[8px]">
      <div className={`ml-[2px] h-[8px] shrink-0 ${GRIP}`} />
      <div className="mt-[4px] mr-[4px] flex h-[40px] gap-px rounded-t-[4px] bg-[#3a3a3a]">
        {TABS.map((t, i) => (
          <button key={t.id} aria-label={t.id} className={`flex flex-1 items-center justify-center ${i ? "border-r border-[#303030]" : "bg-[#444]"}`}>
            <svg viewBox="-1 -1 26 26" className="h-[26px] w-[26px]" aria-hidden="true">{t.icon}</svg>
          </button>
        ))}
      </div>
      <div className="mt-[6px] flex gap-[2px] pl-[6px]">
        {CATEGORIES.map((c) => (
          <button key={c.id} aria-label={c.id} className={`h-[34px] w-[34px] rounded-[4px] ${c.active ? "bg-[#5b87c4]" : ""}`}>
            <svg viewBox="0 0 34 34" className="h-[34px] w-[34px]" aria-hidden="true">{c.icon}</svg>
          </button>
        ))}
      </div>
      <Drop label="图形类别" value="样条线" box="mt-[9px] ml-[5px] h-[30px]" arrow="right-[10px]" />
      <div className="mt-[7px] flex flex-1 gap-[3px] pb-[5px] pl-[4px]">
        <div className="flex flex-1 flex-col">
          <Rollout title="对象类型" className="h-[285px]">
            <div className="flex h-[28px] items-center pl-[66px] text-[17px] leading-[24px] text-[#888]">
              <input id="autogrid" type="checkbox" disabled className="mr-[7px] h-[16px] w-[16px] appearance-none bg-[#5a5a5a]" />
              <label htmlFor="autogrid">自动栅格</label>
            </div>
            <div className="mt-[4px] flex items-center pl-[66px]">
              <span className="relative h-[16px] w-[16px]">
                <input aria-label="开始新图形" type="checkbox" defaultChecked className="block h-[16px] w-[16px] appearance-none bg-[#6a6a6a]" />
                <svg viewBox="0 0 16 16" className="pointer-events-none absolute inset-0" aria-hidden="true"><path d="M3 8L7 12L14 4" fill="none" stroke="#fff" strokeWidth="3" /></svg>
              </span>
              <button className="ml-[12px] h-[30px] w-[154px] rounded-[4px] bg-[#4d5f7b] text-[18px] leading-[24px] text-[#8792a4]">开始新图形</button>
            </div>
            <div className="mt-[5px] grid grid-cols-2 gap-x-[7px] gap-y-[7px] px-[15px]">
              {SHAPES.map((s) => (
                <button key={s} className="h-[24px] rounded-[4px] bg-[#646464] text-[17px] leading-[22px] text-[#dadada] shadow-[0_0_1px_#333]">{s}</button>
              ))}
            </div>
          </Rollout>
          <Rollout title="名称和颜色" className="mt-[4px] h-[85px]">
            <div className="mt-[12px] flex items-center pl-[24px]">
              <input aria-label="名称" defaultValue="Line001" className="h-[28px] w-[197px] bg-[#646464] pb-[2px] pl-[4px] font-['Liberation_Mono',monospace] text-[15px] text-[#dcdcdc]" />
              <button aria-label="颜色" className="ml-[6px] h-[29px] w-[25px] border border-black bg-[#c9f2dc]" />
            </div>
          </Rollout>
        </div>
        <div className="w-[9px] bg-[#3b3b3b]" />
      </div>
    </aside>
  );
}

function LayoutStrip() {
  return (
    <aside className="flex w-[279px] shrink-0 flex-col bg-[#444] pt-[10px]">
      <div className={`mr-[9px] ml-[3px] h-[8px] shrink-0 ${GRIP}`} />
      <div className="mt-[3px] flex w-[60px] flex-1 flex-col justify-end border-r border-black bg-linear-to-r from-[#333] to-[#2a2a2a] pb-[5px]">
        <button aria-label="展开" className="ml-[15px] flex h-[29px] w-[29px] items-center justify-center rounded-[4px] border border-[#222] bg-[#505050]">
          <svg viewBox="0 0 8 14" className="h-[13px] w-[8px]"><path d="M0 0L8 7L0 14Z" fill="#eee" /></svg>
        </button>
        <button aria-label="视口布局" className="mt-[15px] ml-[6px] grid h-[66px] grid-cols-2 grid-rows-2 gap-px rounded-l-[5px] bg-linear-to-b from-[#5a6c88] to-[#3a7cd6] px-[4px] pt-[12px] pb-[13px]">
          {[0, 1, 2, 3].map((n) => <span key={n} className="rounded-[2px] border border-[#1e2c44] bg-[#5a6679]" />)}
        </button>
      </div>
    </aside>
  );
}

/* ---------- time line and status ---------- */

function TimeLine() {
  const frames = Array.from({ length: 101 }, (_, i) => i);
  return (
    <div className="flex h-[75px] shrink-0 bg-[#444]">
      <div className={`mt-[11px] ml-[3px] h-[62px] w-[8px] shrink-0 ${GRIP}`} />
      <div className="ml-[3px] flex min-w-0 flex-1 flex-col">
        <div className="mt-[6px] flex h-[25px] gap-[2px] text-[#d8d8d8]">
          <button aria-label="上一帧" className="flex w-[22px] items-center justify-center rounded-[4px] bg-[#5c5c5c]">
            <svg viewBox="0 0 8 14" className="h-[13px] w-[7px]"><path d="M7 0L1 7L7 14" fill="none" stroke="#aaa" strokeWidth="1.500" /></svg>
          </button>
          <button className="w-[185px] rounded-[4px] bg-[#626262] text-center leading-[24px]"><Mix>0 / 100</Mix></button>
          <button aria-label="下一帧" className="flex w-[22px] items-center justify-center rounded-[4px] bg-[#5c5c5c]">
            <svg viewBox="0 0 8 14" className="h-[13px] w-[7px]"><path d="M1 0L7 7L1 14" fill="none" stroke="#aaa" strokeWidth="1.500" /></svg>
          </button>
        </div>
        <div className="mt-[7px] flex flex-1 border-t border-black">
          <button aria-label="打开迷你曲线编辑器" className="flex w-[74px] items-center justify-center">
            <svg viewBox="0 0 24 20" className="h-[20px] w-[24px]"><path d="M3 3V18" stroke="#ddd" strokeWidth="5" strokeDasharray="2 1" /><path d="M8 11C11 -1 14 2 16 9S21 19 23 8" fill="none" stroke={TEAL} strokeWidth="1.500" /></svg>
          </button>
          <div className="mr-[76px] flex flex-1 justify-between bg-[#292929] pr-[7px] pl-[9px]">
            {frames.map((f) => (
              <div key={f} className="relative flex w-px flex-col items-center">
                {f === 0 && <span className="absolute top-[2px] -left-[5px] h-[33px] w-[11px] bg-[#8a8120]" />}
                <span className={`relative w-px bg-[#808080] ${f % 5 ? "h-[16px]" : "h-[17px]"}`} />
                {f % 5 === 0 && (
                  <span className={`relative font-['Liberation_Serif',serif] text-[17px] leading-[17px] ${f ? "text-[#bdbdbd]" : "text-[#e8e060]"}`}>{f}</span>
                )}
              </div>
            ))}
          </div>
        </div>
      </div>
    </div>
  );
}

function Spin() {
  return (
    <svg viewBox="0 0 8 18" className="mr-[3px] h-[17px] w-[8px] shrink-0" aria-hidden="true">
      <path d="M4 0L8 7H0ZM4 18L0 11H8Z" fill="#dedede" />
    </svg>
  );
}

function Coord({ axis, value }: { axis: string; value: string }) {
  return (
    <div className="flex items-center text-[#e0e0e0]">
      <label htmlFor={`axis-${axis}`} className="mr-[4px] font-['Liberation_Mono',monospace] text-[15px]">{axis}:</label>
      <div className="flex h-[26px] w-[102px] items-center bg-[#646464]">
        <input id={`axis-${axis}`} defaultValue={value} className="h-full w-full min-w-0 bg-transparent pb-[2px] pl-[3px] font-['Liberation_Mono',monospace] text-[15px] text-[#c4c4c4]" />
        <Spin />
      </div>
    </div>
  );
}

function Play({ label, d, sep = false, fly = false }: { label: string; d: string; sep?: boolean; fly?: boolean }) {
  return (
    <button aria-label={label} className={`flex h-[30px] items-center justify-center ${sep ? "w-[38px] border-l border-black" : "w-[33px]"}`}>
      <svg viewBox="0 0 26 24" className="h-[24px] w-[26px]" aria-hidden="true"><path d={d} fill="#d8d8d8" />{fly && <path d="M26 17V23H20Z" fill="#eee" />}</svg>
    </button>
  );
}

function NavIcon({ label, children, fly = true }: { label: string; children: React.ReactNode; fly?: boolean }) {
  return (
    <button aria-label={label} className="h-[33px] w-[34px]">
      <svg viewBox="0 0 34 33" className="h-[33px] w-[34px]" aria-hidden="true">{children}{fly && <path d="M31 26V32H25Z" fill="#eee" />}</svg>
    </button>
  );
}

function StatusBar() {
  return (
    <div className="flex h-[82px] shrink-0 bg-[#444] text-[18px] leading-[24px] text-[#dcdcdc]">
      <div className="my-[5px] ml-[4px] flex w-[148px] flex-col border-2 border-white">
        <textarea aria-label="宏录制器" className="h-[34px] resize-none border-b-2 border-white bg-[#dcc2c2]" />
        <input aria-label="MAXScript 迷你侦听器" placeholder="MAXScript 迷你侦听器" className="mr-[4px] min-h-0 flex-1 bg-white pb-[10px] pl-[3px] font-['Liberation_Mono','Noto_Sans_CJK_SC',monospace] text-[18px] placeholder:text-[#868686]" />
      </div>
      <div className="my-[4px] ml-[5px] w-px bg-black" />
      <div className="ml-[5px] flex w-[634px] flex-col gap-[13px] pt-[10px]">
        <p className="h-[24px]"><Mix>选择了 1 个 图形</Mix></p>
        <p className="h-[24px]">单击并拖动以选择并移动对象</p>
      </div>
      <div className="flex flex-col">
        <div className="mt-[10px] flex h-[26px] items-center">
          <button aria-label="孤立当前选择切换" className="h-[24px] w-[24px]">
            <svg viewBox="0 0 24 24"><path d="M1 6V1H6M18 1H23V6M23 18V23H18M6 23H1V18" fill="none" stroke={LIGHT} strokeWidth="1.500" /><rect x="7" y="7" width="10" height="10" fill={TEAL} /></svg>
          </button>
          <button aria-label="选择锁定切换" className="ml-[17px] h-[24px] w-[20px]">
            <svg viewBox="0 0 20 24"><path d="M5 11V6Q5 2 10 2T15 6V11" fill="none" stroke={LIGHT} strokeWidth="2.500" /><path d="M2 10H18V23H2Z" fill={LIGHT} /><path d="M10 13V20" stroke="#333" strokeWidth="3" /></svg>
          </button>
          <button aria-label="绝对模式变换输入" className="ml-[17px] h-[24px] w-[24px]">
            <svg viewBox="0 0 24 24"><rect x="2" y="2" width="20" height="20" fill="none" stroke={LIGHT} strokeWidth="3" /><path d="M12 2V8M12 16V22M2 12H8M16 12H22" stroke={LIGHT} strokeWidth="2.500" /><circle cx="12" cy="12" r="4" fill="none" stroke={LIGHT} strokeWidth="2" /></svg>
          </button>
          <div className="ml-[10px] flex gap-[4px]">
            <Coord axis="X" value="-21.75" />
            <Coord axis="Y" value="-0.0" />
            <Coord axis="Z" value="97.83" />
          </div>
          <span className="ml-[7px] whitespace-nowrap"><Mix>栅格 = 10.0</Mix></span>
        </div>
        <div className="mt-[9px] ml-[461px] flex h-[31px] items-center border-l-2 border-black">
          <button aria-label="自适应降级" className="h-[31px] w-[32px] rounded-[4px] bg-[#5b87c4]">
            <svg viewBox="0 0 32 31" className="h-[31px] w-[32px]" fill="none" stroke="#dfe6f0" strokeWidth="1.500"><path d="M16 6L24 11V20L16 25L8 20V11ZM8 11L16 16L24 11M16 16V25" stroke="#222" strokeWidth="3.500" /><path d="M16 6L24 11V20L16 25L8 20V11ZM8 11L16 16L24 11M16 16V25" /></svg>
          </button>
          <button className="ml-[3px] text-[#bdbdbd]">添加时间标记</button>
        </div>
      </div>
      <div className="ml-auto flex flex-col">
        <div className="mt-[7px] flex">
          <Play label="转至开头" d="M2 3H5V21H2ZM14 4V20L6 12ZM24 4V20L15 12Z" />
          <Play sep label="上一帧" d="M12 3V21L2 12ZM14 3H17V21H14ZM21 3H24V21H21Z" />
          <Play fly label="播放动画" d="M4 1L23 12L4 23Z" />
          <Play label="下一帧" d="M14 3V21L24 12ZM9 3H12V21H9ZM2 3H5V21H2Z" />
          <Play sep label="转至结尾" d="M21 3H24V21H21ZM12 4V20L20 12ZM2 4V20L11 12Z" />
        </div>
        <div className="mt-[3px] flex items-center">
          <Play label="关键点模式切换" d="M11 5V19L2 12ZM15 5V19L24 12Z" />
          <div className="flex h-[26px] w-[105px] items-center border-l border-black bg-[#646464]">
            <input aria-label="当前帧" defaultValue="0" className="h-full w-full min-w-0 bg-transparent pb-[2px] pl-[4px] font-['Liberation_Mono',monospace] text-[15px]" />
            <Spin />
          </div>
          <button aria-label="时间配置" className="ml-[12px] h-[26px] w-[26px]">
            <svg viewBox="0 0 26 26"><circle cx="10" cy="9" r="8" fill={LIGHT} /><path d="M10 3V10H15" fill="none" stroke="#333" strokeWidth="2.500" /><circle cx="17" cy="18" r="4.500" fill="#444" stroke={AMBER} strokeWidth="2.500" /><circle cx="17" cy="18" r="6.500" fill="none" stroke={AMBER} strokeWidth="2" strokeDasharray="2.500 2.500" /></svg>
          </button>
        </div>
      </div>
      <div className="mt-[8px] ml-[18px] flex h-[68px] w-[391px] items-center rounded-[5px] bg-[#555] pl-[9px]">
        <svg viewBox="0 0 50 34" className="mt-[6px] h-[34px] w-[50px]" fill="none" stroke="#222" aria-hidden="true"><path d="M0 4H30V11H20V26H12V11H0ZM22 22L40 4M26 24L44 10" /></svg>
      </div>
      <div className="mr-[14px] grid grid-cols-3 content-start pt-[6px]">
        <NavIcon label="缩放所有视图" fly={false}><path d="M16 4H25V25H14V4ZM14 13H25M20 4V25" fill={TEAL} stroke="#444" /><circle cx="14" cy="16" r="5" fill="#444" stroke={LIGHT} strokeWidth="2.500" /><path d="M10 20L6 27" stroke={LIGHT} strokeWidth="3" /></NavIcon>
        <NavIcon label="最大化显示"><path d="M6 8V4H10M22 4H26V8M26 22V26H22M10 26H6V22" fill="none" stroke={LIGHT} strokeWidth="1.500" /><path d="M16 7L23 10V20L16 24L9 20V10Z" fill={TEAL} /><path d="M9 10L16 14L23 10M16 14V24" fill="none" stroke="#2a6a68" /></NavIcon>
        <NavIcon label="缩放区域"><path d="M17 8L22 4L27 7V19L22 23L17 19Z" fill={TEAL} stroke="#2a6a68" /><path d="M22 10V22" stroke="#2a6a68" /><path d="M12 12L16 16L12 20L8 16ZM8 17L12 21L8 25L4 21ZM17 20L20 23L16 27L13 23Z" fill={LIGHT} /></NavIcon>
        <NavIcon label="平移视图"><path d="M11 25Q8 20 5 16Q6 14 8 15L11 18V7Q12 5 13 7V14L14 5Q15 3 16 5V14L18 6Q19 4 20 6V15L22 9Q23 7 24 9V18Q23 24 20 27H13Z" fill={LIGHT} /></NavIcon>
        <NavIcon label="环绕子对象"><circle cx="15" cy="14" r="9" fill={LIGHT} /><path d="M15 14V5A9 9 0 0 0 6 14Z" fill={TEAL} /><path d="M22 5Q28 4 24 12Q18 22 9 25Q4 25 6 20" fill="none" stroke="#444" strokeWidth="4" /><path d="M22 5Q28 4 24 12Q18 22 9 25Q4 25 6 20" fill="none" stroke={LIGHT} strokeWidth="2" /></NavIcon>
        <NavIcon label="最大化视口切换" fly={false}><path d="M6 5H26V25H6Z" fill={LIGHT} /><path d="M6 15H15V25H6Z" fill="#ddd" stroke="#333" /><path d="M15 15L23 8M18 8H23V13" fill="none" stroke="#333" strokeWidth="2" /></NavIcon>
      </div>
    </div>
  );
}

/* ---------- system task bar ---------- */

function Task({ icon, label, className, on = false }: { icon: React.ReactNode; label: string; className: string; on?: boolean }) {
  return (
    <button className={`flex h-full items-center border-b-[3px] border-[#76b9ed] pt-[2px] text-left text-[18px] whitespace-nowrap text-[#f4f4f4] ${on ? "bg-[#454b4e]" : ""} ${className}`}>
      {icon}
      <span className="ml-[4px] font-['Open_Sans','Noto_Sans_CJK_SC',sans-serif]">{label}</span>
    </button>
  );
}

function TaskBar() {
  return (
    <footer className="flex h-[60px] shrink-0 bg-linear-to-r from-[#0a2028] via-[#141b1f] to-[#0f181c] text-white">
      <button aria-label="开始" className="flex w-[72px] items-center justify-center">
        <svg viewBox="0 0 24 24" className="h-[24px] w-[24px]"><path d="M0 3.500L10 2V11.500H0ZM11 1.800L24 0V11.500H11ZM0 12.500H10V22L0 20.500ZM11 12.500H24V24L11 22.200Z" fill="#fff" /></svg>
      </button>
      <div className="flex w-[516px] items-center bg-[#f2f2f2]">
        <svg viewBox="0 0 34 34" className="ml-[13px] h-[34px] w-[34px]"><circle cx="17" cy="17" r="13.500" fill="#fff" stroke="#111" strokeWidth="3.500" /></svg>
        <input aria-label="搜索" placeholder="在这里输入你要搜索的内容" className="ml-[12px] h-full min-w-0 flex-1 bg-transparent pb-[3px] text-[22px] text-black placeholder:text-[#333]" />
        <svg viewBox="0 0 18 26" className="mr-[22px] h-[26px] w-[18px]" fill="none" stroke="#222" strokeWidth="1.500"><rect x="5" y="1" width="8" height="15" rx="3" /><path d="M1 12V16Q2 20 9 20T17 16V12M9 20V25M5 25H13" /></svg>
      </div>
      <button aria-label="任务视图" className="flex w-[83px] items-center justify-center pr-[12px]">
        <svg viewBox="0 0 26 26" className="h-[26px] w-[26px]" fill="none" stroke="#f0f0f0" strokeWidth="1.500"><path d="M1 2V5H17V2M1 24V21H17V24M2 9H16V17H2ZM23 1V7M23 12V25M21 10H25" /></svg>
      </button>
      <Task className="w-[228px] pl-[14px]" label="屏幕截图" icon={<svg viewBox="0 0 24 32" className="mr-[6px] h-[31px] w-[24px]"><path d="M2 1H19L20 5V17L22 19V28H8V32L2 28Z" fill="#ffe08a" /><path d="M2 1L8 3V32L2 28Z" fill="#f7cc5c" /></svg>} />
      <button aria-label="邮件" className="flex w-[89px] items-center justify-center">
        <svg viewBox="0 0 38 34" className="h-[34px] w-[38px]"><path d="M1 12L19 0L37 12V33H1Z" fill="#1463b8" /><path d="M4 10H34L19 24Z" fill="#fff" /><path d="M1 12L19 24L1 33Z" fill="#31a6ec" /><path d="M37 12L19 24L37 33Z" fill="#1c86d8" /><path d="M1 33L19 22L37 33Z" fill="#2bb0f2" /></svg>
      </button>
      <Task className="w-[228px] pl-[8px]" label="我的经验_个人中心..." icon={<svg viewBox="0 0 36 36" className="h-[36px] w-[36px]"><path d="M1 18C2 6 11 1 19 1C29 1 36 9 35 17C34 24 25 25 21 22C25 18 22 12 16 12C9 12 3 15 1 18Z" fill="#35c1c0" /><path d="M27 4C33 8 36 13 35 18C34 24 25 25 21 22C23 21 24 19 23 16C22 12 24 8 27 4Z" fill="#5edb72" /><path d="M1 18C3 13 10 9 17 12C12 13 9 18 11 25C13 31 18 34 23 34C10 38 0 29 1 18Z" fill="#1a78c8" /><path d="M17 12C12 14 10 19 11 25C13 34 25 36 33 26C27 29 18 28 17 22C16 18 19 15 21 14Q19 12 17 12Z" fill="#17519e" /></svg>} />
      <Task on className="ml-[8px] w-[240px] pl-[15px]" label="茶几建模.max - Au..." icon={<MaxLogo className="h-[36px] w-[36px]" />} />
      <div className="flex flex-1">
        <div className="ml-[110px] flex flex-col gap-[8px] pt-[4px]">
          <div className="flex items-center gap-[7px] text-[22px] leading-[22px]">
            <span className="flex h-[22px] w-[22px] items-center justify-center bg-white text-[20px] text-black">拼</span>
            <span>英</span>
            <svg viewBox="0 0 18 20" className="h-[20px] w-[18px]"><path d="M8 1Q12 12 1 16Q12 21 16 12Q17 5 8 1Z" fill="none" stroke="#fff" strokeWidth="1.500" /></svg>
            <span className="ml-[10px] font-bold">,</span>
            <span>简</span>
          </div>
          <svg viewBox="0 0 22 22" className="h-[22px] w-[22px]" fill="none" stroke="#fff"><circle cx="11" cy="11" r="3.500" strokeWidth="1.500" /><path d="M9 1H13L14 4L17 3L20 7L18 9V13L20 15L17 19L14 18L13 21H9L8 18L5 19L2 15L4 13V9L2 7L5 3L8 4Z" strokeWidth="1.300" /></svg>
        </div>
        <div className="ml-auto flex items-end pb-[20px]">
          <div className="mr-[18px] flex items-center gap-[12px]">
            <svg viewBox="0 0 18 12" className="h-[12px] w-[18px]"><path d="M1 11L9 2L17 11" fill="none" stroke="#fff" strokeWidth="1.500" /></svg>
            <svg viewBox="0 0 26 20" className="h-[20px] w-[26px]"><path d="M3 15Q-1 8 6 6Q9 0 15 3Q22 4 19 12V15Z" fill="#ccc" /><circle cx="18" cy="13" r="6" fill="#fff" /><path d="M14.500 12A4 4 0 0 1 21 11M21.500 14A4 4 0 0 1 15 15.500" fill="none" stroke="#1868b8" strokeWidth="1.500" /></svg>
            <svg viewBox="0 0 24 16" className="h-[16px] w-[24px]"><path d="M6 3H21V13H6Z" fill="#fff" stroke="#fff" /><path d="M22 6V11M1 1V5Q4 8 6 5V1M4 7V14H7" fill="none" stroke="#fff" strokeWidth="1.500" /></svg>
            <svg viewBox="0 0 24 18" className="h-[18px] w-[24px]" fill="none" stroke="#fff" strokeWidth="1.500"><path d="M6 3H23V13H6M14 13V17M9 17H19M1 1H5V6H1ZM3 6V12H6" /></svg>
            <svg viewBox="0 0 24 18" className="h-[18px] w-[24px]" fill="none" stroke="#fff" strokeWidth="1.300"><path d="M1 6H5L10 1V17L5 12H1ZM13 6Q15 9 13 12M16 4Q20 9 16 14" /><path d="M19 1Q25 9 19 17" stroke="#888" /></svg>
          </div>
        </div>
        <div className="mr-[32px] flex flex-col justify-end pb-[5px] font-['Open_Sans',sans-serif] text-[19px] leading-[24px]">2020/6/16</div>
        <svg viewBox="0 0 30 24" className="mt-[19px] mr-[39px] h-[24px] w-[30px]"><path d="M0 6L4 8V24H0ZM6 24V8L13 16L22 6V24H18V15L13 21L10 17V24ZM25 6L30 0V24H25Z" fill="#fff" /></svg>
        <div className="relative mt-[17px] mr-[19px] h-[40px] w-[37px]">
          <svg viewBox="0 0 37 40" className="h-[40px] w-[37px]"><path d="M0 1H24V20H14L8 25V20H0Z" fill="#fff" /><path d="M4 6H20M4 10H20M4 14H20" stroke="#222" strokeWidth="1.500" /><circle cx="24" cy="24" r="12" fill="#3a4245" stroke="#8a8f90" /></svg>
          <span className="absolute top-[12px] left-[19px] font-['Open_Sans',sans-serif] text-[18px] leading-[24px] font-bold">1</span>
        </div>
        <div className="mr-[6px] w-px bg-[#7a8285]" />
      </div>
    </footer>
  );
}

/* ---------- corner banner ---------- */

function Banner() {
  return (
    <div className="pointer-events-none absolute right-[119px] bottom-[36px] z-30 h-[193px] w-[385px]">
      <svg viewBox="0 0 385 193" className="absolute inset-0" aria-hidden="true">
        <g fill="#d2d2d2"><ellipse cx="176" cy="20" rx="14" ry="19" /><ellipse cx="210" cy="22" rx="14" ry="19" /><ellipse cx="148" cy="46" rx="13" ry="17" /></g>
      </svg>
      <span className="absolute top-[44px] left-[-2px] font-['Liberation_Sans',sans-serif] text-[92px] leading-[92px] font-bold text-[#d6d6d6]/90">B</span>
      <span className="absolute top-[124px] left-[4px] font-['Liberation_Sans',sans-serif] text-[48px] leading-[48px] text-[#dedede]">jin</span>
      <div className="absolute right-0 bottom-0 flex h-[160px] w-[340px] items-center bg-[#222e55] pl-[26px] text-[#d2d4d8]">
        <svg viewBox="0 0 64 68" className="h-[68px] w-[64px]" fill="none" stroke="#d2d4d8" aria-hidden="true">
          <path d="M3 8C2 20 2 44 3 54C5 66 16 69 25 63L56 43C63 37 63 31 57 25L30 5C22 0 14 2 14 13V48C14 54 19 57 23 52" strokeWidth="5" strokeLinecap="round" />
          <path d="M24 27V41L34 34Z" fill="#d2d4d8" strokeWidth="2" /><path d="M42 28V40" strokeWidth="2.500" />
        </svg>
        <div className="mt-[-8px] ml-[24px] w-[202px]">
          <div className="flex justify-between text-[46px] leading-[54px] font-bold"><span>溜</span><span>溜</span><span>自</span><span>学</span></div>
          <div className="font-['Inter',sans-serif] text-[25px] leading-[28px] font-light">zixue.3D66.COM</div>
        </div>
      </div>
    </div>
  );
}

export default function App() {
  return (
    <div className="relative flex h-screen min-h-[900px] flex-col overflow-hidden bg-[#444] font-['Noto_Sans_CJK_SC',sans-serif]">
      <TitleBar />
      <MenuBar />
      <Toolbar />
      <Ribbon />
      <main className="flex min-h-0 flex-1">
        <LayoutStrip />
        <div className="relative mt-[9px] mb-[2px] grid min-w-0 flex-1 grid-cols-2 grid-rows-2 gap-[5px]">
          <TopView />
          <FrontView />
          <LeftView />
          <PerspectiveView />
          <QuadMenu />
        </div>
        <CommandPanel />
      </main>
      <TimeLine />
      <StatusBar />
      <TaskBar />
      <Banner />
    </div>
  );
}
